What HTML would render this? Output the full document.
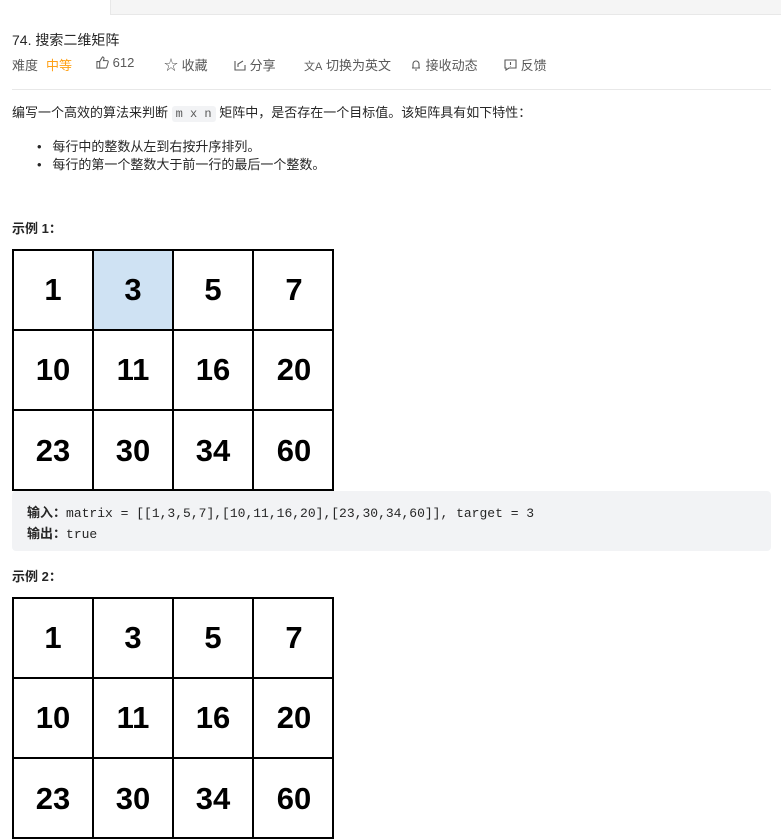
<!DOCTYPE html>
<html><head><meta charset="utf-8"><style>
*{margin:0;padding:0;box-sizing:border-box}
body{width:781px;height:807px;overflow:hidden;background:#fff;font-family:"Liberation Sans","Noto Sans CJK SC",sans-serif;color:#262626;position:relative}
.abs{position:absolute;white-space:nowrap}
.tabs{position:absolute;left:0;top:0;width:781px;height:15px;background:#f5f5f5;border-bottom:1px solid #e8e8e8}
.tab1{position:absolute;left:0;top:0;width:111px;height:15px;background:#fff;border-right:1px solid #e8e8e8}
.meta{font-size:13px;color:#595959;top:55px}
.grid{position:absolute;left:12px;border:2px solid #000;width:322px;height:242px;background:#fff}
.cell{position:absolute;width:80px;height:80px;border-right:2px solid #000;border-bottom:2px solid #000;font:bold 31px "Liberation Sans",Arial,sans-serif;color:#000;display:flex;align-items:center;justify-content:center}
.code{position:absolute;left:12px;top:491px;width:759px;height:60px;background:#f2f3f5;border-radius:4px;font:13px "Liberation Mono",monospace;color:#262626}
</style></head><body>
<div class="tabs"><div class="tab1"></div></div>
<div class="abs" style="left:12px;top:30px;font-size:14px;color:#262626">74. 搜索二维矩阵</div>
<div class="abs meta" style="left:12px">难度</div>
<div class="abs meta" style="left:46px;color:#ffa116">中等</div>
<div class="abs meta" style="left:96px">
<svg width="13" height="13" viewBox="0 0 14 14" style="vertical-align:-2px"><path d="M1 6h3v7H1zM4 6l3-5c1 0 2 1 1.5 2.5L8 5h4c1 0 1.5 1 1 2l-1.5 5c-.3.7-.8 1-1.5 1H4" fill="none" stroke="#595959" stroke-width="1.1"/></svg> 612</div>
<div class="abs meta" style="left:164px"><span style="font-size:14px">☆</span> 收藏</div>
<div class="abs meta" style="left:234px"><svg width="12" height="12" viewBox="0 0 12 12" style="vertical-align:-1px"><path d="M1 2v9h10V6M4 8V5l5-3" fill="none" stroke="#595959" stroke-width="1.1"/></svg> 分享</div>
<div class="abs meta" style="left:304px"><span style="font-size:11px">文A</span> 切换为英文</div>
<div class="abs meta" style="left:410px"><svg width="12" height="12" viewBox="0 0 12 12" style="vertical-align:-1px"><path d="M3 9V5a3 3 0 016 0v4M2 9h8M5 11h2" fill="none" stroke="#595959" stroke-width="1.1"/></svg> 接收动态</div>
<div class="abs meta" style="left:504px"><svg width="13" height="12" viewBox="0 0 13 12" style="vertical-align:-1px"><path d="M1 1h11v8H5l-3 2V9H1z M6.5 3v3 M6.5 7v.5" fill="none" stroke="#595959" stroke-width="1.1"/></svg> 反馈</div>
<div style="position:absolute;left:12px;top:89px;width:759px;height:1px;background:#e8e8e8"></div>
<div class="abs" style="left:12px;top:102px;font-size:13px">编写一个高效的算法来判断 <span style="background:#f2f3f5;border-radius:3px;padding:1px 4px;font:12px 'Liberation Mono',monospace;color:#595959">m x n</span> 矩阵中，是否存在一个目标值。该矩阵具有如下特性：</div>
<div class="abs" style="left:37px;top:136px;font-size:13px">•&nbsp;&nbsp;&nbsp;每行中的整数从左到右按升序排列。</div>
<div class="abs" style="left:37px;top:154px;font-size:13px">•&nbsp;&nbsp;&nbsp;每行的第一个整数大于前一行的最后一个整数。</div>
<div class="abs" style="left:12px;top:218px;font-size:13px;font-weight:bold">示例 1：</div>
<div class="grid" style="top:249px">
<div class="cell" style="left:0;top:0">1</div><div class="cell" style="left:80px;top:0;background:#cfe2f3">3</div><div class="cell" style="left:160px;top:0">5</div><div class="cell" style="left:240px;top:0;border-right:0">7</div>
<div class="cell" style="left:0;top:80px">10</div><div class="cell" style="left:80px;top:80px">11</div><div class="cell" style="left:160px;top:80px">16</div><div class="cell" style="left:240px;top:80px;border-right:0">20</div>
<div class="cell" style="left:0;top:160px;border-bottom:0">23</div><div class="cell" style="left:80px;top:160px;border-bottom:0">30</div><div class="cell" style="left:160px;top:160px;border-bottom:0">34</div><div class="cell" style="left:240px;top:160px;border:0">60</div>
</div>
<div class="code">
<div class="abs" style="left:15px;top:11px"><b style="font-family:'Liberation Sans','Noto Sans CJK SC',sans-serif">输入：</b>matrix = [[1,3,5,7],[10,11,16,20],[23,30,34,60]], target = 3</div>
<div class="abs" style="left:15px;top:32px"><b style="font-family:'Liberation Sans','Noto Sans CJK SC',sans-serif">输出：</b>true</div>
</div>
<div class="abs" style="left:12px;top:566px;font-size:13px;font-weight:bold">示例 2：</div>
<div class="grid" style="top:597px">
<div class="cell" style="left:0;top:0">1</div><div class="cell" style="left:80px;top:0">3</div><div class="cell" style="left:160px;top:0">5</div><div class="cell" style="left:240px;top:0;border-right:0">7</div>
<div class="cell" style="left:0;top:80px">10</div><div class="cell" style="left:80px;top:80px">11</div><div class="cell" style="left:160px;top:80px">16</div><div class="cell" style="left:240px;top:80px;border-right:0">20</div>
<div class="cell" style="left:0;top:160px;border-bottom:0">23</div><div class="cell" style="left:80px;top:160px;border-bottom:0">30</div><div class="cell" style="left:160px;top:160px;border-bottom:0">34</div><div class="cell" style="left:240px;top:160px;border:0">60</div>
</div>
</body></html>
